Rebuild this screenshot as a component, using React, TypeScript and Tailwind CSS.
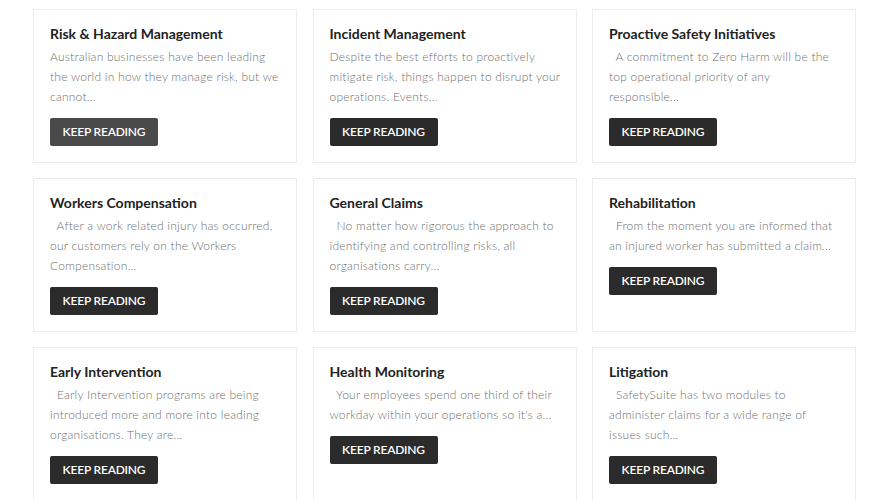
import React from "react";

type Card = { title: string; lines: string; hover?: boolean };

const cards: Card[] = [
  { title: "Risk & Hazard Management", lines: "Australian businesses have been leading the world in how they manage risk, but we cannot…", hover: true },
  { title: "Incident Management", lines: "Despite the best efforts to proactively mitigate risk, things happen to disrupt your operations. Events…" },
  { title: "Proactive Safety Initiatives", lines: "\u00a0\u00a0A commitment to Zero Harm will be the top operational priority of any responsible…" },
  { title: "Workers Compensation", lines: "\u00a0\u00a0After a work related injury has occurred, our customers rely on the Workers Compensation…" },
  { title: "General Claims", lines: "\u00a0\u00a0No matter how rigorous the approach to identifying and controlling risks, all organisations carry…" },
  { title: "Rehabilitation", lines: "\u00a0\u00a0From the moment you are informed that an injured worker has submitted a claim…" },
  { title: "Early Intervention", lines: "\u00a0\u00a0Early Intervention programs are being introduced more and more into leading organisations. They are…" },
  { title: "Health Monitoring", lines: "\u00a0\u00a0Your employees spend one third of their workday within your operations so it's a…" },
  { title: "Litigation", lines: "\u00a0\u00a0SafetySuite has two modules to administer claims for a wide range of issues such…" },
];

export default function App() {
  return (
    <div className="w-[890px] h-[500px] overflow-hidden bg-white" style={{ fontFamily: "Lato, 'Open Sans', sans-serif" }}>
      <div className="grid grid-cols-[264px_264px_264px] gap-x-[15.5px] gap-y-[15px] pl-[33px] pt-[9px]">
        {cards.map((c, i) => (
          <div key={i} className="h-[154px] border border-[#ececec] pl-[16px] pr-[14px] pt-[15px] flex flex-col items-start">
            <h3 className="text-[14px] leading-[18px] font-bold text-[#222]">{c.title}</h3>
            <p className="mt-[4px] text-[12px] leading-[20px] font-light text-[#6f6f6f] tracking-[0.23px]">{c.lines}</p>
            <button className={`mt-[11px] h-[28px] w-[108px] rounded-[2px] text-[12px] font-semibold tracking-[-0.2px] text-white ${c.hover ? "bg-[#4a4a4a]" : "bg-[#2b2b2b]"}`}>
              KEEP READING
            </button>
          </div>
        ))}
      </div>
    </div>
  );
}
